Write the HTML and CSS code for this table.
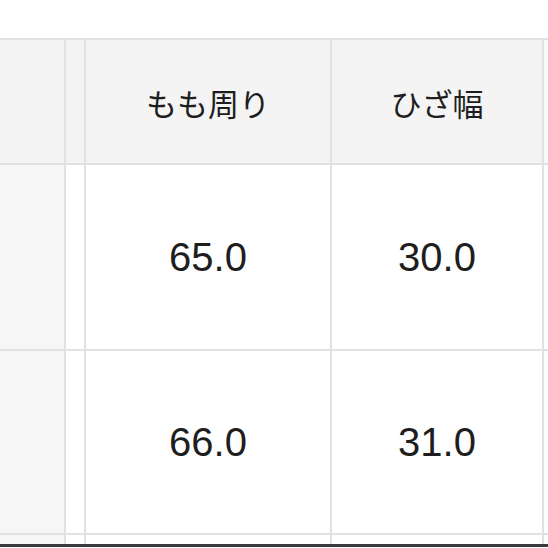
FILE: index.html
```html
<!DOCTYPE html>
<html lang="ja">
<head>
<meta charset="utf-8">
<link rel="stylesheet" href="styles.css">
</head>
<body>
<div class="page">
  <div class="table">
    <div class="cell head"></div>
    <div class="cell head"></div>
    <div class="cell head label">もも周り</div>
    <div class="cell head label">ひざ幅</div>
    <div class="cell head edge"></div>

    <div class="cell side"></div>
    <div class="cell"></div>
    <div class="cell num">65.0</div>
    <div class="cell num">30.0</div>
    <div class="cell edge"></div>

    <div class="cell side"></div>
    <div class="cell"></div>
    <div class="cell num">66.0</div>
    <div class="cell num">31.0</div>
    <div class="cell edge"></div>

    <div class="cell side"></div>
    <div class="cell"></div>
    <div class="cell"></div>
    <div class="cell"></div>
    <div class="cell edge"></div>
  </div>
  <div class="bottom-bar"></div>
</div>
</body>
</html>
```
FILE: styles.css
```css
html, body {
  margin: 0;
  padding: 0;
  background: #ffffff;
}
.page {
  width: 548px;
  height: 548px;
  overflow: hidden;
  display: flex;
  flex-direction: column;
  padding-top: 38px;
  box-sizing: border-box;
}
.table {
  display: grid;
  grid-template-columns: 64px 18px 244px 210px 10px;
  grid-template-rows: 123px 184px 182px 10px;
  gap: 2px;
  padding-top: 2px;
  background: #dfe1e4;
  width: 560px;
  flex: none;
}
.cell {
  background: #ffffff;
  display: flex;
  align-items: center;
  justify-content: center;
  color: #1e1e1e;
}
.head {
  background: #f4f4f4;
}
.head.edge {
  background: #f8f8f8;
}
.side {
  background: #f6f6f7;
}
.label {
  font-family: "Noto Sans CJK JP", "Noto Sans", sans-serif;
  font-size: 31px;
  padding-top: 1px;
}
.num {
  font-family: "Liberation Sans", Arial, sans-serif;
  font-size: 40px;
}
.bottom-bar {
  flex: none;
  height: 3px;
  background: #3a3a3c;
  margin-top: -1px;
}
```
